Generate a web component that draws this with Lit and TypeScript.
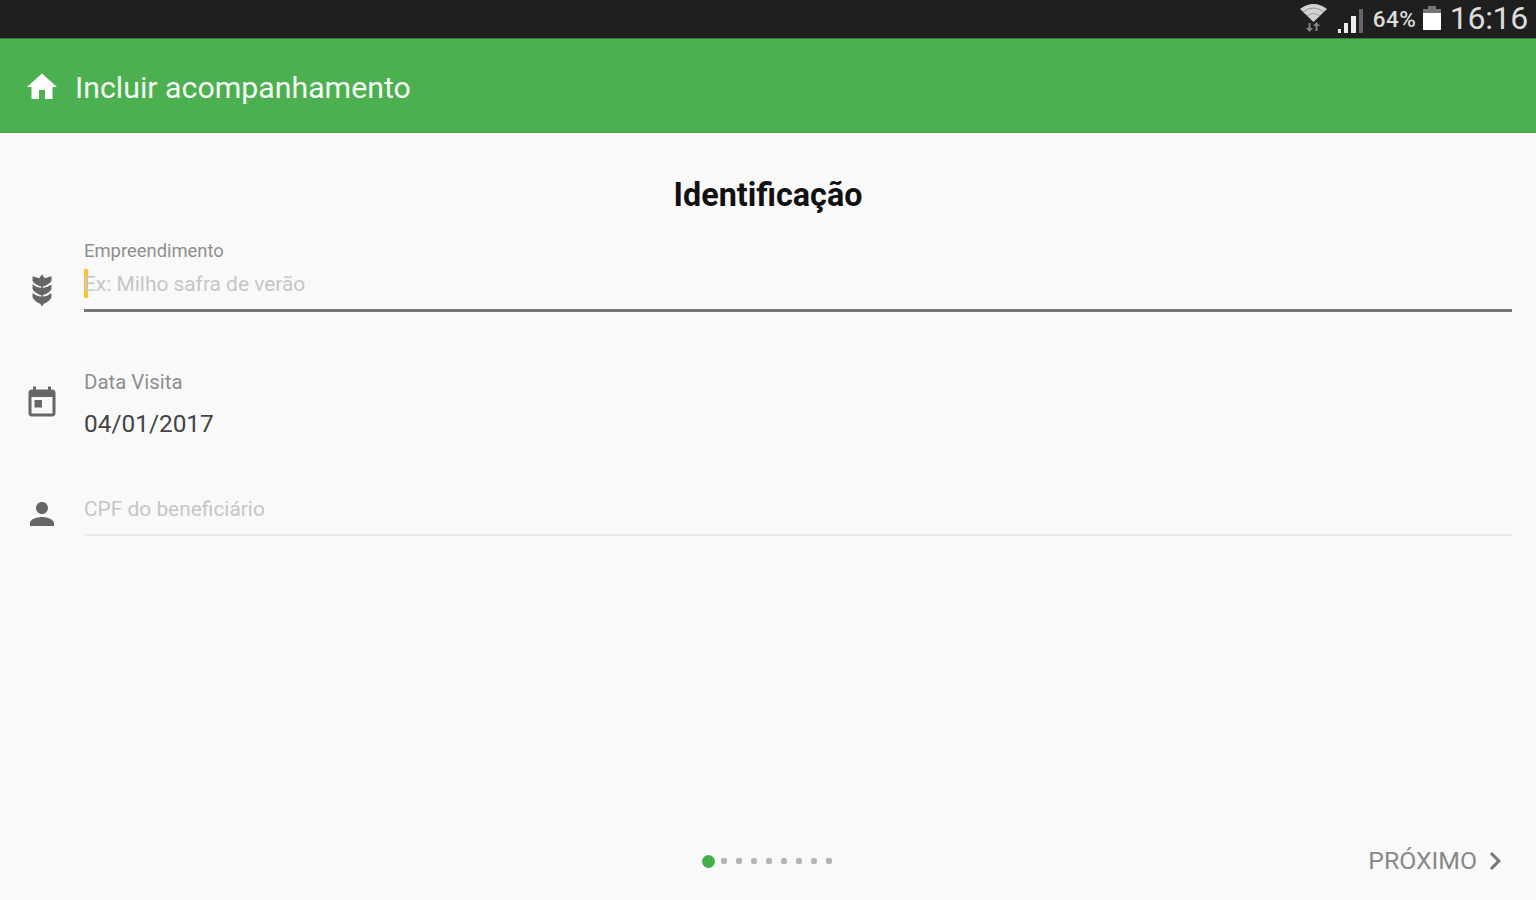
import { LitElement, html, css, svg } from 'lit';
import { customElement, property } from 'lit/decorators.js';

const icons: Record<string, unknown> = {
  home: svg`<path d="M10 20v-6h4v6h5v-8h3L12 3 2 12h3v8z"/>`,
  event: svg`<path d="M19 3h-1V1h-2v2H8V1H6v2H5c-1.11 0-2 .9-2 2v14c0 1.1.89 2 2 2h14c1.1 0 2-.9 2-2V5c0-1.1-.9-2-2-2zm0 16H5V8h14v11zM7 10h5v5H7z"/>`,
  person: svg`<path d="M12 12c2.21 0 4-1.79 4-4s-1.79-4-4-4-4 1.79-4 4 1.79 4 4 4zm0 2c-2.67 0-8 1.34-8 4v2h16v-2c0-2.66-5.33-4-8-4z"/>`,
  next: svg`<path d="M10 6 8.590 7.410 13.170 12l-4.580 4.590L10 18l6-6z"/>`,
  wheat: svg`
    <path d="M12 1.500 13.800 4.200 18.300 2.900V5.800Q17 8.500 12 9.800 7 8.500 5.700 5.800V2.900L10.200 4.200z"/>
    <path d="M5.700 8.400 Q8.500 10.500 12 10.700 Q15.500 10.500 18.300 8.400 V11.400 Q17 14.300 12 15.600 Q7 14.300 5.700 11.400z"/>
    <path d="M5.700 14.200 Q8.500 16.300 12 16.500 Q15.500 16.300 18.300 14.200 V17 Q16.500 20 13.200 21.200 L12 23 10.800 21.200 Q7.500 20 5.700 17z"/>
    <path d="M11.500 5h1v17h-1z"/>`,
};

@customElement('form-row')
export class FormRow extends LitElement {
  @property() icon = '';

  static styles = css`
    :host {
      display: grid;
      grid-template-columns: 84px 1fr;
      padding-right: 24px;
    }

    .icon {
      display: block;
      width: 36px;
      height: 36px;
      margin: var(--icon-top, 0) 0 0 24px;
      fill: #666;
    }
  `;

  render() {
    return html`
      <svg class="icon" viewBox="0 0 24 24">${icons[this.icon]}</svg>
      <div><slot></slot></div>
    `;
  }
}

@customElement('app-root')
export class AppRoot extends LitElement {
  static styles = css`
    :host {
      display: flex;
      flex-direction: column;
      height: 900px;
      background: #f9f9f9;
      font-family: Roboto, sans-serif;
      overflow: hidden;
    }

    .status {
      display: flex;
      align-items: flex-start;
      justify-content: flex-end;
      box-sizing: border-box;
      height: 38px;
      padding-right: 8px;
      background: #1f1f1f;
      color: #ddd;
    }

    .signals {
      display: block;
      width: 64px;
      height: 38px;
    }

    .percent {
      width: 46px;
      margin-left: 9px;
      font-size: 22.5px;
      font-weight: 500;
      line-height: 38px;
      letter-spacing: 0.5px;
      white-space: nowrap;
    }

    .battery {
      display: block;
      width: 18px;
      height: 38px;
      margin-left: 4px;
    }

    .clock {
      margin-left: 9px;
      font-size: 32px;
      line-height: 37px;
      letter-spacing: -0.3px;
    }

    .bar {
      display: flex;
      align-items: center;
      box-sizing: border-box;
      height: 95px;
      padding: 3px 0 0 24px;
      background: #4caf50;
      border-top: 1px solid #3a7a3c;
      border-bottom: 2px solid #42aa47;
      color: #f4fbf4;
    }

    .home {
      width: 36px;
      height: 36px;
      fill: #fff;
    }

    .title {
      margin-left: 15px;
      padding-top: 2px;
      font-size: 30.3px;
      line-height: 40px;
    }

    .page {
      flex: 1;
      border-top: 2px solid #fff;
    }

    h1 {
      margin: 40px 0 0;
      font-size: 32.3px;
      font-weight: 700;
      line-height: 40px;
      text-align: center;
      color: #111;
    }

    .crop {
      --icon-top: 33px;
      margin-top: 24px;
    }

    .date {
      --icon-top: 15px;
      margin-top: 58px;
    }

    .cpf {
      --icon-top: 2px;
      margin-top: 54px;
    }

    .label {
      font-size: 18.4px;
      line-height: 24px;
      color: #8e8e8e;
    }

    .visit {
      font-size: 20.4px;
    }

    .input {
      display: flex;
      align-items: center;
      box-sizing: border-box;
      font-size: 20.9px;
      color: #c6c6c6;
    }

    .focused {
      height: 49px;
      padding-bottom: 5px;
      border-bottom: 3px solid #757575;
    }

    .caret {
      width: 4px;
      height: 29px;
      margin-right: -4px;
      border-radius: 1px;
      background: #fbc02d;
    }

    .idle {
      height: 42px;
      padding-bottom: 11px;
      border-bottom: 2px solid #ececec;
    }

    .value {
      margin-top: 14px;
      font-size: 24.4px;
      line-height: 32px;
      color: #444;
    }

    .footer {
      display: grid;
      grid-template-columns: 1fr auto 1fr;
      align-items: center;
      height: 78px;
      padding-right: 23px;
    }

    .dots {
      display: flex;
      grid-column: 2;
      align-items: center;
      gap: 9px;
      margin-left: 21px;
    }

    .dot {
      width: 6px;
      height: 6px;
      border-radius: 2px;
      background: #b4b4b4;
    }

    .dot.on {
      width: 13px;
      height: 13px;
      margin-right: -3px;
      border-radius: 50%;
      background: #43b049;
    }

    .next {
      display: flex;
      align-items: center;
      justify-content: flex-end;
      font-size: 24.8px;
      line-height: 34px;
      color: #888;
    }

    .next svg {
      width: 36px;
      height: 36px;
      fill: #777;
    }
  `;

  render() {
    return html`
      <div class="status">
        <svg class="signals" viewBox="0 0 64 38">
          <path d="M0 9Q13.500-1 27 9L13.500 22z" fill="#d2d2d2"/>
          <path d="M3 12Q13.500 4 24 12M7 16Q13.500 11 20 16" fill="none" stroke="#999" stroke-width="1"/>
          <path d="M8.500 23v5H6l3.500 4 3.500-4h-2.500v-5zM15.500 31v-5H13l3.500-4 3.500 4h-2.500v5z" fill="#858585"/>
          <path d="M38 29h3v4h-3zM44 23h4v10h-4zM51 16h5v17h-5z" fill="#eee"/>
          <path d="M59 9h4v24h-4z" fill="#666"/>
        </svg>
        <span class="percent">64%</span>
        <svg class="battery" viewBox="0 0 18 38">
          <path d="M5 6h8v3h5v5H0V9h5z" fill="#777"/>
          <path d="M0 13h18v17H0z" fill="#fff"/>
        </svg>
        <span class="clock">16:16</span>
      </div>
      <header class="bar">
        <svg class="home" viewBox="0 0 24 24">${icons.home}</svg>
        <span class="title">Incluir acompanhamento</span>
      </header>
      <main class="page">
        <h1>Identificação</h1>
        <form-row class="crop" icon="wheat">
          <div class="label">Empreendimento</div>
          <div class="input focused"><i class="caret"></i>Ex: Milho safra de verão</div>
        </form-row>
        <form-row class="date" icon="event">
          <div class="label visit">Data Visita</div>
          <div class="value">04/01/2017</div>
        </form-row>
        <form-row class="cpf" icon="person">
          <div class="input idle">CPF do beneficiário</div>
        </form-row>
      </main>
      <footer class="footer">
        <div class="dots">
          <i class="dot on"></i>
          ${Array.from({ length: 8 }, () => html`<i class="dot"></i>`)}
        </div>
        <div class="next">PRÓXIMO <svg viewBox="0 0 24 24">${icons.next}</svg></div>
      </footer>
    `;
  }
}
